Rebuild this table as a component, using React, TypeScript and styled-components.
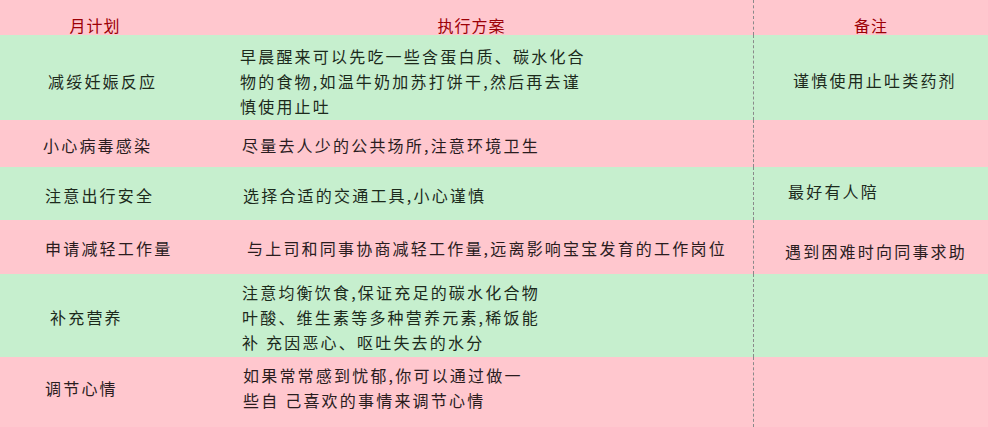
import React from "react";
import styled, { createGlobalStyle } from "styled-components";

const GlobalStyle = createGlobalStyle`
  html, body {
    margin: 0;
    padding: 0;
    background: #ffc7ce;
  }
  body {
    font-family: "Noto Sans CJK SC", "Noto Sans", sans-serif;
  }
`;

interface PlanRow {
  plan: string;
  steps: string[];
  note: string;
  height: number;
  tone: "good" | "bad";
  planIndent: number;
  stepIndent: number;
  noteIndent: number;
  shift: number;
  noteShift: number;
}

const rows: PlanRow[] = [
  {
    plan: "减绥妊娠反应",
    steps: [
      "早晨醒来可以先吃一些含蛋白质、碳水化合",
      "物的食物,如温牛奶加苏打饼干,然后再去谨",
      "慎使用止吐",
    ],
    note: "谨慎使用止吐类药剂",
    height: 85,
    tone: "good",
    planIndent: 48,
    stepIndent: 240,
    noteIndent: 793,
    shift: 4,
    noteShift: 3,
  },
  {
    plan: "小心病毒感染",
    steps: ["尽量去人少的公共场所,注意环境卫生"],
    note: "",
    height: 47,
    tone: "bad",
    planIndent: 43,
    stepIndent: 242,
    noteIndent: 790,
    shift: 2,
    noteShift: 0,
  },
  {
    plan: "注意出行安全",
    steps: ["选择合适的交通工具,小心谨慎"],
    note: "最好有人陪",
    height: 53,
    tone: "good",
    planIndent: 45,
    stepIndent: 243,
    noteIndent: 788,
    shift: 2,
    noteShift: -2,
  },
  {
    plan: "申请减轻工作量",
    steps: ["与上司和同事协商减轻工作量,远离影响宝宝发育的工作岗位"],
    note: "遇到困难时向同事求助",
    height: 54,
    tone: "bad",
    planIndent: 45,
    stepIndent: 247,
    noteIndent: 785,
    shift: 1,
    noteShift: 4,
  },
  {
    plan: "补充营养",
    steps: [
      "注意均衡饮食,保证充足的碳水化合物",
      "叶酸、维生素等多种营养元素,稀饭能",
      "补 充因恶心、呕吐失去的水分",
    ],
    note: "",
    height: 83,
    tone: "good",
    planIndent: 50,
    stepIndent: 242,
    noteIndent: 790,
    shift: 2,
    noteShift: 0,
  },
  {
    plan: "调节心情",
    steps: ["如果常常感到忧郁,你可以通过做一", "些自 己喜欢的事情来调节心情"],
    note: "",
    height: 70,
    tone: "bad",
    planIndent: 45,
    stepIndent: 243,
    noteIndent: 790,
    shift: -4,
    noteShift: 0,
  },
];

const COL1 = 190;
const COL2 = 563;

export default function App() {
  return (
    <>
      <GlobalStyle />
      <Table>
        <HeaderRow>
          <HeadCell>月计划</HeadCell>
          <HeadCell>执行方案</HeadCell>
          <HeadCell $divider>备注</HeadCell>
        </HeaderRow>
        {rows.map((r) => (
          <BodyRow key={r.plan} $tone={r.tone} $height={r.height}>
            <Cell $indent={r.planIndent} $shift={r.shift}>
              {r.plan}
            </Cell>
            <Cell $indent={r.stepIndent - COL1} $shift={r.shift}>
              <div>
                {r.steps.map((s) => (
                  <Line key={s}>{s}</Line>
                ))}
              </div>
            </Cell>
            <Cell
              $divider
              $indent={r.noteIndent - COL1 - COL2}
              $shift={r.noteShift}
            >
              {r.note}
            </Cell>
          </BodyRow>
        ))}
      </Table>
    </>
  );
}

const Table = styled.div`
  width: 988px;
  height: 427px;
  overflow: hidden;
  display: flex;
  flex-direction: column;
  background: #ffc7ce;
`;

const HeaderRow = styled.div`
  display: grid;
  grid-template-columns: ${COL1}px ${COL2}px 1fr;
  height: 35px;
  background: #ffc7ce;
`;

const HeadCell = styled.div<{ $divider?: boolean }>`
  display: flex;
  justify-content: center;
  align-items: flex-end;
  padding-bottom: 0;
  font-size: 16px;
  line-height: 20px;
  letter-spacing: 1px;
  color: #9c0006;
  border-left: ${(p) => (p.$divider ? "1px dashed #8a8a8a" : "none")};
`;

const BodyRow = styled.div<{ $tone: "good" | "bad"; $height: number }>`
  display: grid;
  grid-template-columns: ${COL1}px ${COL2}px 1fr;
  height: ${(p) => p.$height}px;
  background: ${(p) => (p.$tone === "good" ? "#c6efce" : "#ffc7ce")};
  color: ${(p) => (p.$tone === "good" ? "#1c2a1c" : "#2a1c1e")};
`;

const Cell = styled.div<{ $divider?: boolean; $indent: number; $shift: number }>`
  display: flex;
  align-items: center;
  box-sizing: border-box;
  padding-left: ${(p) => p.$indent - (p.$divider ? 1 : 0)}px;
  padding-top: ${(p) => Math.max(p.$shift, 0) * 2}px;
  padding-bottom: ${(p) => Math.max(-p.$shift, 0) * 2}px;
  font-size: 16px;
  line-height: 25px;
  letter-spacing: 2.2px;
  white-space: nowrap;
  border-left: ${(p) => (p.$divider ? "1px dashed #8a8a8a" : "none")};
`;

const Line = styled.div`
  white-space: pre;
`;
